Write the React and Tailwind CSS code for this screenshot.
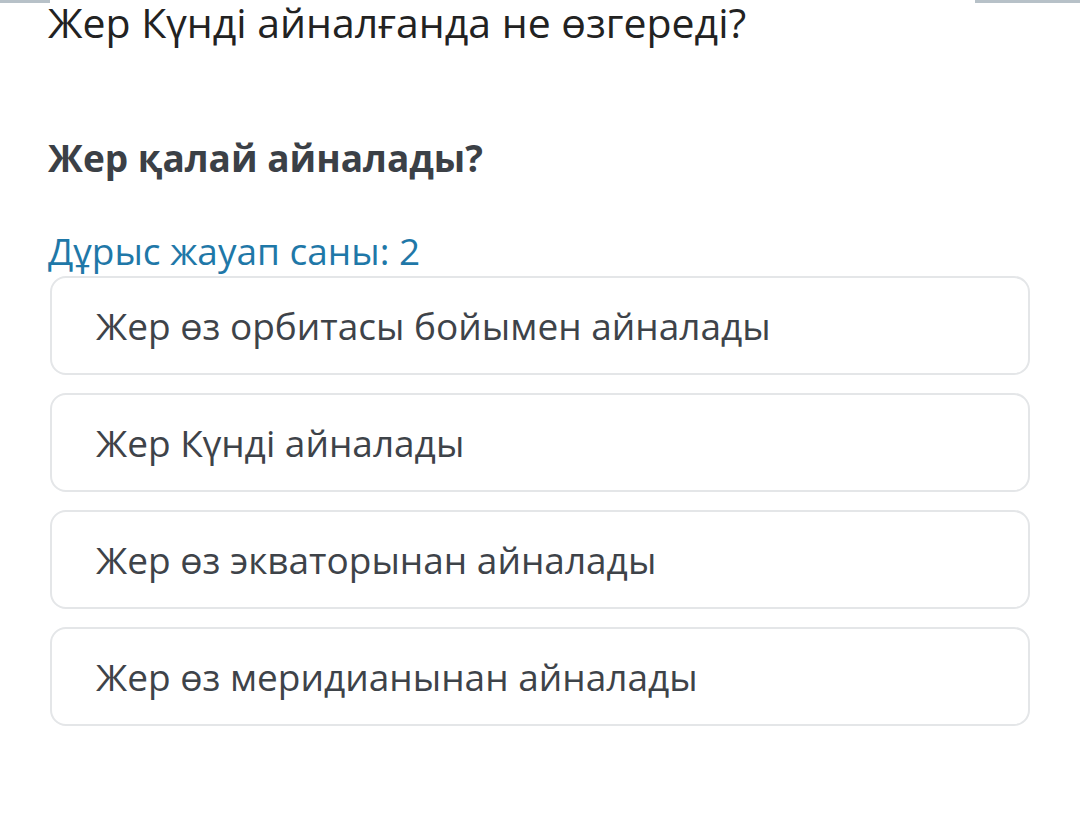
const options = [
  'Жер өз орбитасы бойымен айналады',
  'Жер Күнді айналады',
  'Жер өз экваторынан айналады',
  'Жер өз меридианынан айналады',
];

export default function App() {
  return (
    <div className="relative w-[1080px] h-[814px] bg-white overflow-hidden font-['Open_Sans',sans-serif]">
      {/* top edge bars */}
      <div className="absolute top-0 left-0 w-[50px] h-[3px] bg-[#b7c1c8]" />
      <div className="absolute top-0 right-0 w-[105px] h-[3px] bg-[#b7c1c8]" />

      <div className="pl-[48px] pr-[50px]">
        <h1 className="text-[41px] leading-[44px] text-[#222]">
          Жер Күнді айналғанда не өзгереді?
        </h1>
        <h2 className="mt-[89px] text-[37px] leading-[50px] font-bold text-[#3b4046]">
          Жер қалай айналады?
        </h2>
        <p className="mt-[46px] text-[37px] leading-[44px] text-[#1f78a8]">
          Дұрыс жауап саны: 2
        </p>
        <div className="mt-[3px] flex flex-col gap-[18px] pl-[2px]">
          {options.map((o) => (
            <div
              key={o}
              className="h-[99px] flex items-center px-[44px] border-2 border-[#e4e6e8] rounded-[16px] text-[37px] text-[#3e4349]"
            >
              {o}
            </div>
          ))}
        </div>
      </div>
    </div>
  );
}
